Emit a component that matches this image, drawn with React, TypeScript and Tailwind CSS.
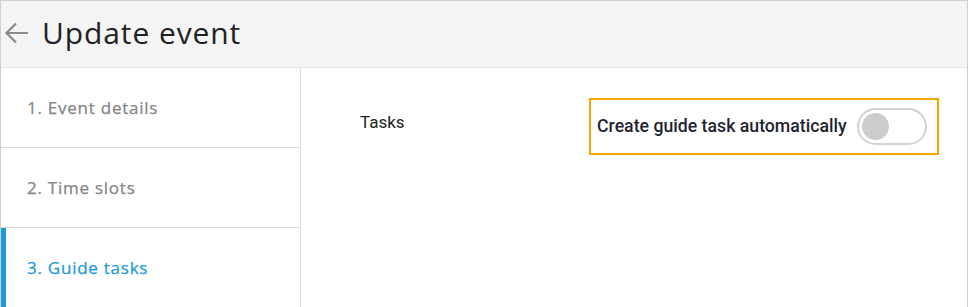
import { useState } from 'react';

const steps = ['1. Event details', '2. Time slots', '3. Guide tasks'];

export default function App() {
  const [active] = useState(2);
  const [auto, setAuto] = useState(false);

  return (
    <div className="w-[968px] h-[307px] overflow-hidden bg-white border border-b-0 border-[#cfcfcf] flex flex-col">
      {/* Header */}
      <div className="h-[67px] shrink-0 bg-[#f4f4f4] border-b border-[#e4e4e4] flex items-center">
        <svg width="26" height="26" viewBox="0 0 26 26" className="ml-[3px] mt-[-2px]">
          <path d="M24 13H3M12 3.5L2.5 13l9.5 9.5" fill="none" stroke="#8a8a8a" strokeWidth="2.2" />
        </svg>
        <h1 className="ml-[12px] text-[30px] text-[#222] font-['Open_Sans',sans-serif] tracking-[0.9px] leading-none mt-[-3px]">
          Update event
        </h1>
      </div>

      <div className="flex flex-1">
        {/* Steps */}
        <div className="w-[300px] shrink-0 border-r border-[#dcdcdc] flex flex-col">
          {steps.map((s, i) => (
            <div
              key={s}
              className={`h-[80px] flex items-center border-[#dcdcdc] ${i < steps.length - 1 ? 'border-b' : ''}`}
            >
              <div className={`w-[5px] self-stretch ${i === active ? 'bg-[#1b9ad8]' : ''}`} />
              <span
                className={`ml-[21px] text-[17px] tracking-[0.75px] font-['Open_Sans',sans-serif] [-webkit-text-stroke:0.25px_currentColor] ${
                  i === active ? 'text-[#1b9ad8]' : 'text-[#858585]'
                }`}
              >
                {s}
              </span>
            </div>
          ))}
        </div>

        {/* Content */}
        <div className="flex-1 flex items-start pt-[30px] font-['Roboto',sans-serif]">
          <div className="ml-[59px] w-[229px] pt-[12px] text-[17px] text-[#222]">Tasks</div>
          <div className="h-[57px] w-[350px] border-2 border-[#f5a800] flex items-center pl-[6px]">
            <span className="text-[17.7px] font-medium text-[#1e2430]">Create guide task automatically</span>
            <button
              onClick={() => setAuto(!auto)}
              className={`ml-[10px] w-[70px] h-[37px] rounded-full border-2 flex items-center px-[3px] ${
                auto ? 'border-[#1b9ad8] justify-end' : 'border-[#d2d2d2] justify-start'
              }`}
            >
              <span className={`w-[27px] h-[27px] rounded-full ${auto ? 'bg-[#1b9ad8]' : 'bg-[#cccccc]'}`} />
            </button>
          </div>
        </div>
      </div>
    </div>
  );
}
